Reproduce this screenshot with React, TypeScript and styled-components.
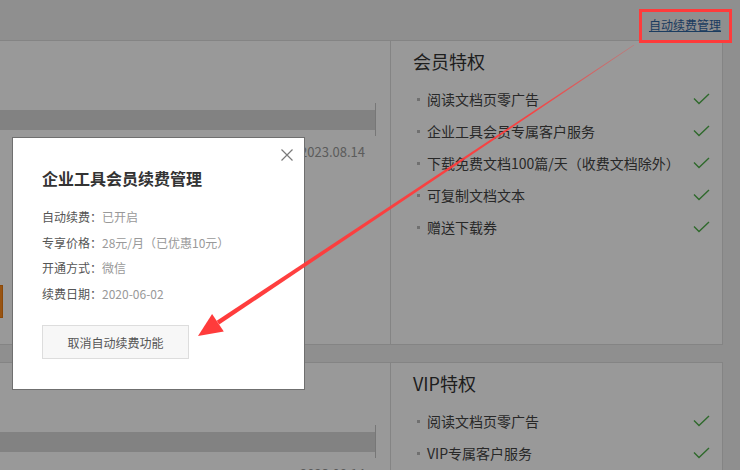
import React from "react";
import styled, { createGlobalStyle } from "styled-components";

const GlobalStyle = createGlobalStyle`
  html, body { margin: 0; padding: 0; }
  body {
    background: #eeeeee;
    font-family: "Noto Sans CJK SC", "Noto Sans", sans-serif;
  }
  * { box-sizing: border-box; }
`;

const Page = styled.div`
  position: relative;
  width: 740px;
  height: 470px;
  overflow: hidden;
  background: #eeeeee;
`;

const TopBar = styled.div`
  height: 40px;
  display: flex;
  justify-content: flex-end;
  align-items: flex-start;
  padding-right: 19px;
`;

const ManageLink = styled.a`
  margin-top: 17px;
  font-size: 12px;
  line-height: 16px;
  color: #2e64a0;
  text-decoration: underline;
  cursor: pointer;
`;

const Section = styled.div`
  display: grid;
  grid-template-columns: 390px 333px;
  height: 305px;
  margin-bottom: 17px;
`;

const LeftCard = styled.div`
  background: #fff;
  border-top: 1px solid #dddddd;
  border-bottom: 1px solid #dddddd;
  display: flex;
  flex-direction: column;
`;

const BarRow = styled.div`
  margin-top: 62px;
  height: 33px;
  display: flex;
  align-items: center;
`;

const Bar = styled.div`
  width: 375px;
  height: 20px;
  background: #d9d9d9;
`;

const Tick = styled.div`
  width: 1px;
  height: 33px;
  background: #c6c6c6;
`;

const DateText = styled.div`
  margin-top: 6px;
  padding-right: 25px;
  text-align: right;
  font-size: 13px;
  line-height: 20px;
  color: #999;
`;

const OrangeButton = styled.div`
  margin-top: 123px;
  margin-left: -120px;
  width: 123px;
  height: 33px;
  background: #ff8d1e;
  border: 1px solid #e87a10;
`;

const RightCard = styled.div`
  background: #fff;
  border: 1px solid #dddddd;
  padding: 7px 12px 0 22px;
`;

const CardTitle = styled.div`
  font-size: 18px;
  line-height: 26px;
  color: #333;
`;

const PerkList = styled.ul`
  list-style: none;
  margin: 9px 0 0;
  padding: 0 0 0 4px;
`;

const PerkItem = styled.li`
  height: 32px;
  display: flex;
  align-items: center;
`;

const Bullet = styled.span`
  width: 3px;
  height: 3px;
  background: #bbbbbb;
  margin-right: 7px;
  flex: none;
`;

const PerkText = styled.span`
  flex: 1;
  font-size: 14px;
  color: #444;
`;

const Overlay = styled.div`
  position: absolute;
  inset: 0;
  background: rgba(0, 0, 0, 0.4);
`;

const Modal = styled.div`
  position: absolute;
  left: 12px;
  top: 137px;
  width: 293px;
  height: 253px;
  background: #fff;
  border: 1px solid #6f6f6f;
  padding: 28px 20px 0 29px;
  display: flex;
  flex-direction: column;
  align-items: flex-start;
`;

const CloseButton = styled.div`
  position: absolute;
  top: 11px;
  right: 11px;
  width: 12px;
  height: 12px;
  display: flex;
`;

const ModalTitle = styled.div`
  font-size: 16px;
  line-height: 24px;
  font-weight: 700;
  color: #333;
`;

const InfoList = styled.div`
  margin-top: 14px;
  display: flex;
  flex-direction: column;
`;

const InfoRow = styled.div`
  font-size: 12px;
  line-height: 25.5px;
  color: #555;
`;

const InfoValue = styled.span`
  color: #999;
`;

const CancelButton = styled.button`
  margin-top: 19px;
  width: 147px;
  height: 34px;
  background: #f7f7f7;
  border: 1px solid #dddddd;
  font-family: inherit;
  font-size: 12px;
  color: #555;
  padding: 0;
  cursor: pointer;
`;

const RedBox = styled.div`
  position: absolute;
  left: 639px;
  top: 9px;
  width: 93px;
  height: 34px;
  border: 3px solid #ff3b3b;
`;

const ArrowLayer = styled.svg`
  position: absolute;
  left: 0;
  top: 0;
  pointer-events: none;
`;

const Check = () => (
  <svg width="17" height="12" viewBox="0 0 17 12">
    <polyline points="1,5.5 6,10.5 16,1" fill="none" stroke="#4fb04a" strokeWidth="1.4" />
  </svg>
);

type Section = { title: string; perks: string[]; orange?: boolean };

const sections: Section[] = [
  {
    title: "会员特权",
    perks: [
      "阅读文档页零广告",
      "企业工具会员专属客户服务",
      "下载免费文档100篇/天（收费文档除外）",
      "可复制文档文本",
      "赠送下载券",
    ],
    orange: true,
  },
  {
    title: "VIP特权",
    perks: ["阅读文档页零广告", "VIP专属客户服务", "下载免费文档", "可复制文档文本"],
  },
];

const info: [string, string][] = [
  ["自动续费：", "已开启"],
  ["专享价格：", "28元/月（已优惠10元）"],
  ["开通方式：", "微信"],
  ["续费日期：", "2020-06-02"],
];

// arrow geometry
const S = { x: 634, y: 45 };
const T = { x: 198, y: 336 };
const dx = T.x - S.x;
const dy = T.y - S.y;
const len = Math.hypot(dx, dy);
const u = { x: dx / len, y: dy / len };
const p = { x: -u.y, y: u.x };
const headLen = 24;
const B = { x: T.x - headLen * u.x, y: T.y - headLen * u.y };
const pt = (o: { x: number; y: number }, k: number) => `${(o.x + k * p.x).toFixed(1)},${(o.y + k * p.y).toFixed(1)}`;
const shaft = [pt(S, 0.4), pt(B, 2.3), pt(B, -2.3), pt(S, -0.4)].join(" ");
const head = [pt(B, 10.5), `${T.x},${T.y}`, pt(B, -10.5)].join(" ");

export default function App() {
  return (
    <>
      <GlobalStyle />
      <Page>
        <TopBar>
          <ManageLink>自动续费管理</ManageLink>
        </TopBar>
        {sections.map((s) => (
          <Section key={s.title}>
            <LeftCard>
              <BarRow>
                <Bar />
                <Tick />
              </BarRow>
              <DateText>2023.08.14</DateText>
              {s.orange && <OrangeButton />}
            </LeftCard>
            <RightCard>
              <CardTitle>{s.title}</CardTitle>
              <PerkList>
                {s.perks.map((perk) => (
                  <PerkItem key={perk}>
                    <Bullet />
                    <PerkText>{perk}</PerkText>
                    <Check />
                  </PerkItem>
                ))}
              </PerkList>
            </RightCard>
          </Section>
        ))}
        <Overlay />
        <Modal>
          <CloseButton>
            <svg width="12" height="12" viewBox="0 0 12 12">
              <path d="M0.5 0.5 L11.5 11.5 M11.5 0.5 L0.5 11.5" stroke="#7a7a7a" strokeWidth="1.2" fill="none" />
            </svg>
          </CloseButton>
          <ModalTitle>企业工具会员续费管理</ModalTitle>
          <InfoList>
            {info.map(([label, value]) => (
              <InfoRow key={label}>
                {label}
                <InfoValue>{value}</InfoValue>
              </InfoRow>
            ))}
          </InfoList>
          <CancelButton>取消自动续费功能</CancelButton>
        </Modal>
        <RedBox />
        <ArrowLayer width="740" height="470" viewBox="0 0 740 470">
          <defs>
            <linearGradient id="fade" gradientUnits="userSpaceOnUse" x1={S.x} y1={S.y} x2={B.x} y2={B.y}>
              <stop offset="0" stopColor="#ff3b3b" stopOpacity="0.35" />
              <stop offset="0.25" stopColor="#ff3b3b" stopOpacity="0.9" />
              <stop offset="1" stopColor="#ff3b3b" stopOpacity="1" />
            </linearGradient>
          </defs>
          <polygon points={shaft} fill="url(#fade)" />
          <polygon points={head} fill="#ff3b3b" />
        </ArrowLayer>
      </Page>
    </>
  );
}
